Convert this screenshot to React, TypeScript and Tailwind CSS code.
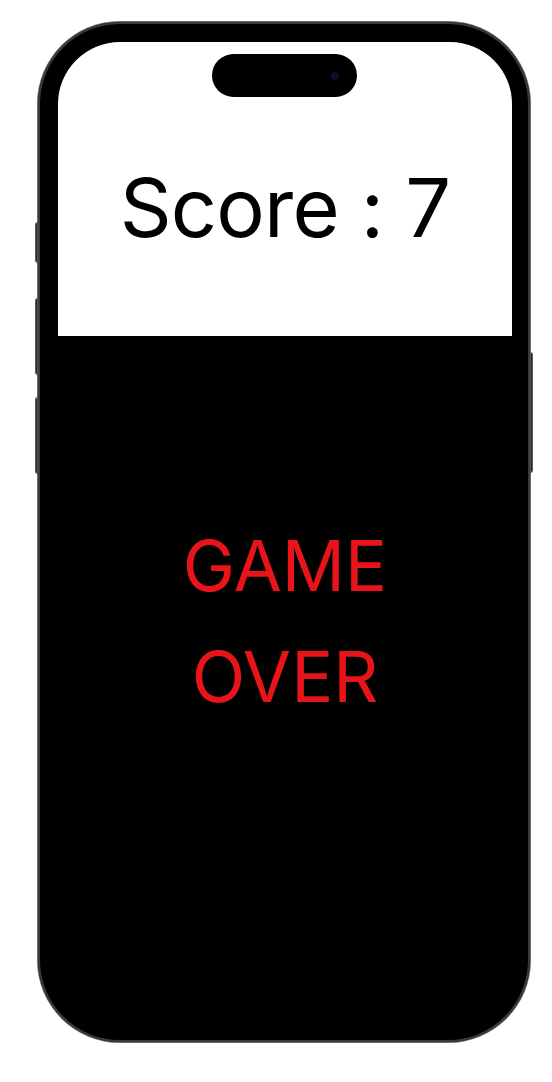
export default function App() {
  return (
    <div className="min-h-screen bg-white pt-[22px] pl-[38px]">
      <div className="relative w-[492px] h-[1020px] rounded-[82px] bg-black shadow-[0_0_0_1px_#6b6b6b,inset_0_0_0_2px_#3a3a3a] pt-[20px] pb-[19px] pl-[20px] pr-[18px]">
        {/* side buttons */}
        <div className="absolute left-[-3px] top-[200px] w-[3px] h-[41px] rounded-l-sm bg-[#2a2a2a] border border-[#555]" />
        <div className="absolute left-[-3px] top-[276px] w-[3px] h-[77px] rounded-l-sm bg-[#2a2a2a] border border-[#555]" />
        <div className="absolute left-[-3px] top-[375px] w-[3px] h-[77px] rounded-l-sm bg-[#2a2a2a] border border-[#555]" />
        <div className="absolute right-[-3px] top-[330px] w-[3px] h-[121px] rounded-r-sm bg-[#2a2a2a] border border-[#555]" />

        <div className="relative h-full rounded-[62px] overflow-hidden flex flex-col bg-black">
          {/* dynamic island */}
          <div className="absolute left-[154px] top-[12px] w-[145px] h-[43px] rounded-full bg-black flex items-center justify-end pr-[18px]">
            <div className="w-[8px] h-[8px] rounded-full bg-[#0d0f2a]" />
          </div>

          <div className="h-[294px] bg-white flex items-start justify-center pt-[126px]">
            <span className="text-[81px] leading-[1] text-black font-['Inter',sans-serif] tracking-[-0.8px]">
              Score : 7
            </span>
          </div>

          <div className="flex-1 bg-black flex flex-col items-center pt-[174px] font-['Inter',sans-serif] text-[#e8141a] text-[70px] leading-[111px]">
            <span>GAME</span>
            <span>OVER</span>
          </div>
        </div>
      </div>
    </div>
  );
}
